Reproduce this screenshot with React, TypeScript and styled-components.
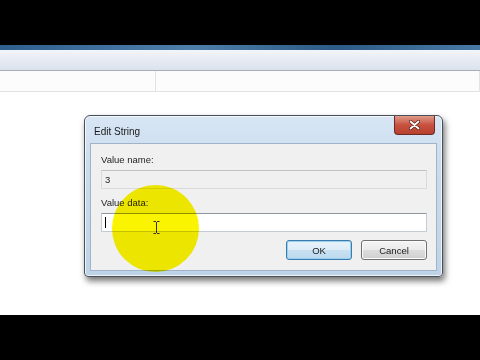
import styled, { createGlobalStyle } from "styled-components";

const Global = createGlobalStyle`
  html, body {
    margin: 0;
    padding: 0;
    background: #000;
  }
  #root {
    width: 480px;
    height: 360px;
  }
`;

const Screen = styled.div`
  width: 480px;
  height: 360px;
  display: flex;
  flex-direction: column;
  background: #000;
  font-family: "Liberation Sans", Arial, sans-serif;
  overflow: hidden;
`;

const Letterbox = styled.div`
  height: 45px;
  flex-shrink: 0;
  background: #000;
`;

const WindowEdge = styled.div`
  height: 5px;
  background: linear-gradient(90deg, #2f5f8e, #4e7eaa 40%, #2d5a86 70%, #4879a6);
`;

const Toolbar = styled.div`
  height: 20px;
  background: linear-gradient(#f2f5f9, #dbe2ec);
  border-bottom: 1px solid #a7aeb8;
`;

const HeaderRow = styled.div`
  height: 20px;
  display: flex;
  background: #fdfcfc;
  border-bottom: 1px solid #e2e2e2;
`;

const HeaderCell = styled.div<{ $w?: number }>`
  width: ${(p) => (p.$w ? `${p.$w}px` : "auto")};
  flex: ${(p) => (p.$w ? "none" : "1")};
  border-right: 1px solid #e3e3e3;
`;

const Workspace = styled.div`
  flex: 1;
  background: #fff;
  padding: 23px 0 0 84px;
  position: relative;
  isolation: isolate;
`;

const Dialog = styled.div`
  width: 359px;
  height: 162px;
  box-sizing: border-box;
  border: 1px solid #4a5058;
  border-radius: 6px 6px 4px 4px;
  background: linear-gradient(#d8e6f4, #cadcee 30%, #bfd3e8);
  box-shadow: 2px 4px 6px rgba(0, 0, 0, 0.55), inset 0 0 0 1px rgba(255, 255, 255, 0.7);
  display: flex;
  flex-direction: column;
  padding: 0 5px 5px 5px;
`;

const TitleBar = styled.div`
  height: 27px;
  display: flex;
  align-items: flex-start;
  justify-content: space-between;
`;

const Title = styled.span`
  font-size: 10px;
  color: #1a1a1a;
  padding: 10px 0 0 4px;
`;

const CloseButton = styled.div`
  width: 41px;
  height: 19px;
  margin-right: 2px;
  box-sizing: border-box;
  border: 1px solid #6d2a24;
  border-top: none;
  border-radius: 0 0 4px 4px;
  background: linear-gradient(#e09a8a, #c8503f 50%, #b8402e);
  display: flex;
  align-items: center;
  justify-content: center;
`;

const Panel = styled.div`
  flex: 1;
  background: #f0f0f0;
  border: 1px solid #9fb4cb;
  padding: 9px 9px 0 10px;
  display: flex;
  flex-direction: column;
`;

const Label = styled.div`
  font-size: 9.5px;
  color: #1e1e1e;
  height: 14px;
  line-height: 14px;
`;

const Field = styled.div<{ $disabled?: boolean }>`
  height: 19px;
  box-sizing: border-box;
  margin: 3px 0 7px;
  padding-left: 3px;
  display: flex;
  align-items: center;
  font-size: 9.5px;
  color: #1e1e1e;
  background: ${(p) => (p.$disabled ? "#f0f0f0" : "#fff")};
  border: 1px solid ${(p) => (p.$disabled ? "#dadada" : "#c5cbd2")};
  border-top-color: ${(p) => (p.$disabled ? "#c2c2c2" : "#8e969f")};
`;

const Caret = styled.span`
  width: 1px;
  height: 11px;
  background: #000;
`;

const ButtonRow = styled.div`
  display: flex;
  justify-content: flex-end;
  gap: 9px;
  margin-top: 1px;
`;

const Button = styled.div<{ $default?: boolean }>`
  width: 66px;
  height: 20px;
  box-sizing: border-box;
  border-radius: 3px;
  display: flex;
  align-items: center;
  justify-content: center;
  font-size: 9.5px;
  color: #1a1a1a;
  border: 1px solid ${(p) => (p.$default ? "#3d7bad" : "#707070")};
  background: ${(p) =>
    p.$default
      ? "linear-gradient(#e8f3fa, #dcecf7 50%, #c9e1f2 51%, #bcd9ee)"
      : "linear-gradient(#f4f4f4, #ebebeb 50%, #dddddd 51%, #cfcfcf)"};
  box-shadow: inset 0 0 0 1px ${(p) => (p.$default ? "#98d1ef" : "#fbfbfb")};
`;

const Highlight = styled.div`
  position: absolute;
  left: 112px;
  top: 93px;
  width: 87px;
  height: 87px;
  border-radius: 50%;
  background: #fbf400;
  mix-blend-mode: multiply;
  pointer-events: none;
  display: flex;
  align-items: center;
  justify-content: center;
`;

const IBeam = () => (
  <svg width="7" height="13" viewBox="0 0 7 13" style={{ marginTop: -3, marginLeft: 2 }}>
    <path d="M0.5 0.5h2.5M4 0.5h2.5M3.5 1v11M0.5 12.5h2.5M4 12.5h2.5" stroke="#333" strokeWidth="1" fill="none" />
  </svg>
);

const CloseGlyph = () => (
  <svg width="11" height="10" viewBox="0 0 11 10">
    <path d="M1.5 1.5l8 7M9.5 1.5l-8 7" stroke="#5a1c16" strokeWidth="3.2" strokeLinecap="round" />
    <path d="M1.5 1.5l8 7M9.5 1.5l-8 7" stroke="#fff" strokeWidth="1.8" strokeLinecap="round" />
  </svg>
);

export default function App() {
  return (
    <Screen>
      <Global />
      <Letterbox />
      <WindowEdge />
      <Toolbar />
      <HeaderRow>
        <HeaderCell $w={155} />
        <HeaderCell />
      </HeaderRow>
      <Workspace>
        <Dialog>
          <TitleBar>
            <Title>Edit String</Title>
            <CloseButton>
              <CloseGlyph />
            </CloseButton>
          </TitleBar>
          <Panel>
            <Label>Value name:</Label>
            <Field $disabled>3</Field>
            <Label>Value data:</Label>
            <Field>
              <Caret />
            </Field>
            <ButtonRow>
              <Button $default>OK</Button>
              <Button>Cancel</Button>
            </ButtonRow>
          </Panel>
        </Dialog>
        <Highlight>
          <IBeam />
        </Highlight>
      </Workspace>
      <Letterbox />
    </Screen>
  );
}
